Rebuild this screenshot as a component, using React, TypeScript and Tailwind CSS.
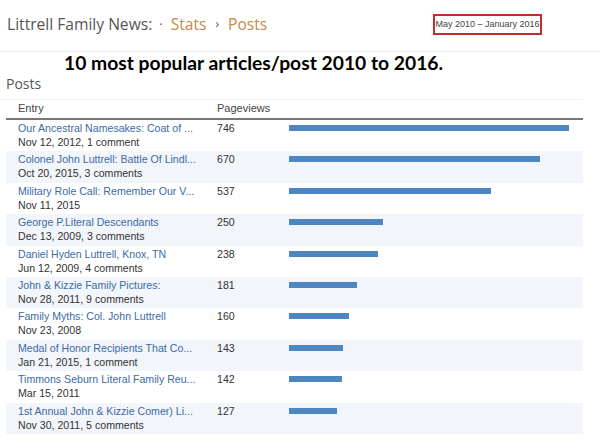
import React from "react";

const rows = [
  { t: "Our Ancestral Namesakes: Coat of ...", d: "Nov 12, 2012, 1 comment", v: 746 },
  { t: "Colonel John Luttrell: Battle Of Lindl...", d: "Oct 20, 2015, 3 comments", v: 670 },
  { t: "Military Role Call: Remember Our V...", d: "Nov 11, 2015", v: 537 },
  { t: "George P.Literal Descendants", d: "Dec 13, 2009, 3 comments", v: 250 },
  { t: "Daniel Hyden Luttrell, Knox, TN", d: "Jun 12, 2009, 4 comments", v: 238 },
  { t: "John & Kizzie Family Pictures:", d: "Nov 28, 2011, 9 comments", v: 181 },
  { t: "Family Myths: Col. John Luttrell", d: "Nov 23, 2008", v: 160 },
  { t: "Medal of Honor Recipients That Co...", d: "Jan 21, 2015, 1 comment", v: 143 },
  { t: "Timmons Seburn Literal Family Reu...", d: "Mar 15, 2011", v: 142 },
  { t: "1st Annual John & Kizzie Comer) Li...", d: "Nov 30, 2011, 5 comments", v: 127 },
];

export default function App() {
  return (
    <div className="w-[600px] h-[440px] bg-white overflow-hidden relative" style={{ fontFamily: '"Liberation Sans", Arial, sans-serif' }}>
      <div className="h-[52px] flex items-center pl-[7px] border-b border-[#eeeeee] relative">
        <div className="flex items-center text-[15.6px] text-[#555] pb-[2px]" style={{ fontFamily: '"Open Sans", sans-serif' }}>
          <span>Littrell Family News:</span>
          <span className="ml-[7px] mr-[8px] text-[13px]">·</span>
          <span className="text-[#c5894a]">Stats</span>
          <span className="mx-[9px] text-[12px] text-[#555]">›</span>
          <span className="text-[#c5894a]">Posts</span>
        </div>
        <div className="absolute left-[433px] top-[14px] w-[109px] h-[21px] border-2 border-[#c62a2f] flex items-center justify-center whitespace-nowrap text-[9px] text-[#444]">
          May 2010 – January 2016
        </div>
      </div>
      <div className="h-[48px] border-b border-[#f0f0f0] mr-[17px] relative">
        <div className="absolute left-[64px] top-[-3px] text-[19.3px] font-bold text-black" style={{ fontFamily: 'Lato, sans-serif' }}>
          10 most popular articles/post 2010 to 2016.
        </div>
        <div className="absolute left-[6px] top-[21px] text-[14px] text-[#555]" style={{ fontFamily: '"Open Sans", sans-serif' }}>
          Posts
        </div>
      </div>
      <div className="ml-[6px] w-[577px]">
        <div className="h-[20px] flex items-end pb-[3px] border-b-2 border-[#777] text-[11px] leading-[13px] text-[#444]">
          <div className="w-[211px] pl-[12px]">Entry</div>
          <div>Pageviews</div>
        </div>
        {rows.map((r, i) => (
          <div key={i} className={`h-[31.4px] flex ${i % 2 === 1 ? "bg-[#f2f5fa]" : "bg-white"}`}>
            <div className="w-[211px] pl-[12px] pt-[1px] text-[10.6px] leading-[14px]">
              <div className="text-[#3b6aa5] whitespace-nowrap">{r.t}</div>
              <div className="text-[#333]">{r.d}</div>
            </div>
            <div className="w-[72px] pt-[1px] text-[10.6px] leading-[14px] text-[#333]">{r.v}</div>
            <div className="pt-[5px]">
              <div className="h-[6px] bg-[#4e86c4]" style={{ width: `${(r.v / 746) * 280}px` }} />
            </div>
          </div>
        ))}
      </div>
    </div>
  );
}
